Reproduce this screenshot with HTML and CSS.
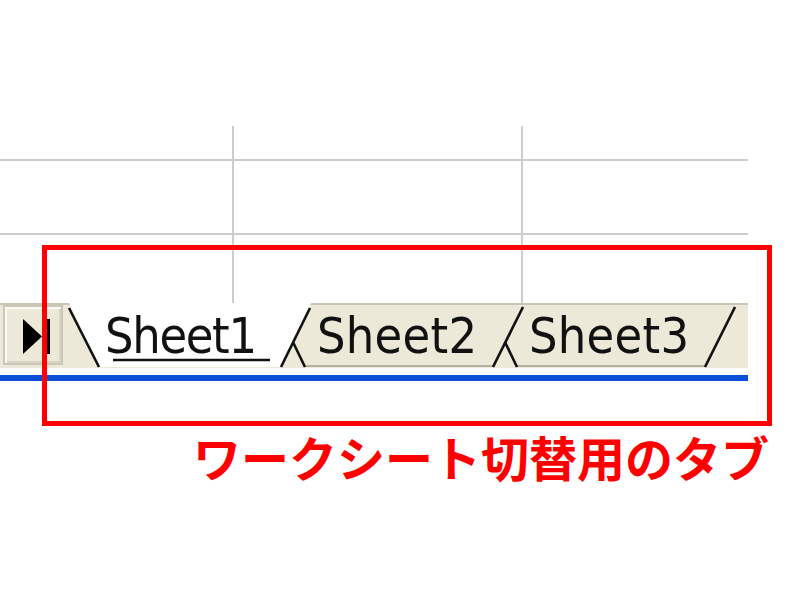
FILE: index.html
```html
<!DOCTYPE html>
<html lang="ja">
<head>
<meta charset="utf-8">
<title>Sheet tabs</title>
<link rel="stylesheet" href="styles.css">
</head>
<body>
<div class="page">
  <div class="sheet">
    <div class="grid">
      <div class="cell"></div><div class="cell"></div><div class="cell last-col"></div>
      <div class="cell"></div><div class="cell"></div><div class="cell last-col"></div>
      <div class="cell last-row"></div><div class="cell last-row"></div><div class="cell last-col last-row"></div>
    </div>
  </div>
  <div class="tabbar">
    <div class="nav-btn">
      <svg class="nav-icon" width="28" height="36" viewBox="0 0 28 36">
        <polygon points="0,0 19,17.5 0,35" fill="#000"/>
        <rect x="19" y="0" width="8" height="35" fill="#000"/>
      </svg>
    </div>
    <svg class="tabs" width="685" height="65" viewBox="0 0 685 65">
      <!-- Sheet3 (back) -->
      <polygon points="424,2 454,64 642,64 672,2" class="tab-fill"/>
      <line x1="454" y1="63" x2="642" y2="63" class="tab-bottom"/>
      <line x1="426" y1="6" x2="454" y2="64" class="tab-edge"/>
      <line x1="642" y1="64" x2="672" y2="4" class="tab-edge"/>
      <text x="466" y="50" class="tab-label" textLength="160">Sheet3</text>
      <!-- Sheet2 -->
      <polygon points="212,2 242,64 430,64 460,2" class="tab-fill"/>
      <line x1="242" y1="63" x2="430" y2="63" class="tab-bottom"/>
      <line x1="214" y1="6" x2="242" y2="64" class="tab-edge"/>
      <line x1="430" y1="64" x2="460" y2="4" class="tab-edge"/>
      <text x="254" y="50" class="tab-label" textLength="160">Sheet2</text>
      <!-- Sheet1 (active) -->
      <polygon points="6,0 36,64 218,64 248,0" class="tab-active"/>
      <line x1="6" y1="5" x2="36" y2="64" class="tab-edge"/>
      <line x1="218" y1="64" x2="247" y2="5" class="tab-edge"/>
      <text x="42" y="50" class="tab-label" textLength="152">Sheet1</text>
      <line x1="50" y1="57" x2="207" y2="57" class="tab-underline"/>
    </svg>
  </div>
  <div class="blue-line"></div>
  <p class="caption">ワークシート切替用のタブ</p>
  <div class="highlight"></div>
</div>
</body>
</html>
```

FILE: styles.css
```css
html, body {
  margin: 0;
  padding: 0;
  background: #ffffff;
}

.page {
  position: relative;
  width: 800px;
  height: 600px;
  overflow: hidden;
}

.sheet {
  width: 748px;
  padding-top: 126px;
}

.grid {
  display: grid;
  grid-template-columns: 234px 289px 225px;
  grid-template-rows: 35px 74px 68px;
}

.cell {
  border-right: 2px solid #cdcdcd;
  border-bottom: 2px solid #cdcdcd;
}

.cell.last-col {
  border-right: none;
}

.cell.last-row {
  border-bottom: none;
}

.tabbar {
  display: flex;
  align-items: flex-start;
  width: 748px;
  height: 65px;
  background: #ece9d8;
  box-shadow: inset 0 2px 0 #c9c6b8;
}

.nav-btn {
  box-sizing: border-box;
  width: 60px;
  height: 60px;
  margin: 2px 0 0 3px;
  border: 2px solid #cbc7b8;
  box-shadow: inset 2px 2px 0 #fbfaf6, inset -2px -2px 0 #d9d5c6;
  background: #ece9d8;
  display: flex;
  align-items: center;
  justify-content: flex-start;
  padding-left: 18px;
}

.nav-icon {
  display: block;
  margin-top: 4px;
}

.tabs {
  display: block;
  flex: none;
}

.tab-fill {
  fill: #ece9d8;
}

.tab-active {
  fill: #ffffff;
}

.tab-edge {
  stroke: #111111;
  stroke-width: 2.6;
  fill: none;
}

.tab-bottom {
  stroke: #b4b0a2;
  stroke-width: 2;
}

.tab-underline {
  stroke: #111111;
  stroke-width: 2.6;
}

.tab-label {
  font-family: "DejaVu Sans Condensed", "DejaVu Sans", sans-serif;
  font-size: 50px;
  fill: #111111;
}

.blue-line {
  width: 748px;
  height: 6px;
  margin-top: 7px;
  background: #0a4fd6;
}

.caption {
  margin: 51px 0 0 193px;
  font-family: "Noto Sans CJK JP", sans-serif;
  font-weight: 700;
  font-size: 48px;
  line-height: 48px;
  color: #ff0000;
  white-space: nowrap;
}

.highlight {
  position: absolute;
  left: 42px;
  top: 245px;
  width: 720px;
  height: 171px;
  border: 5px solid #ff0000;
}
```
